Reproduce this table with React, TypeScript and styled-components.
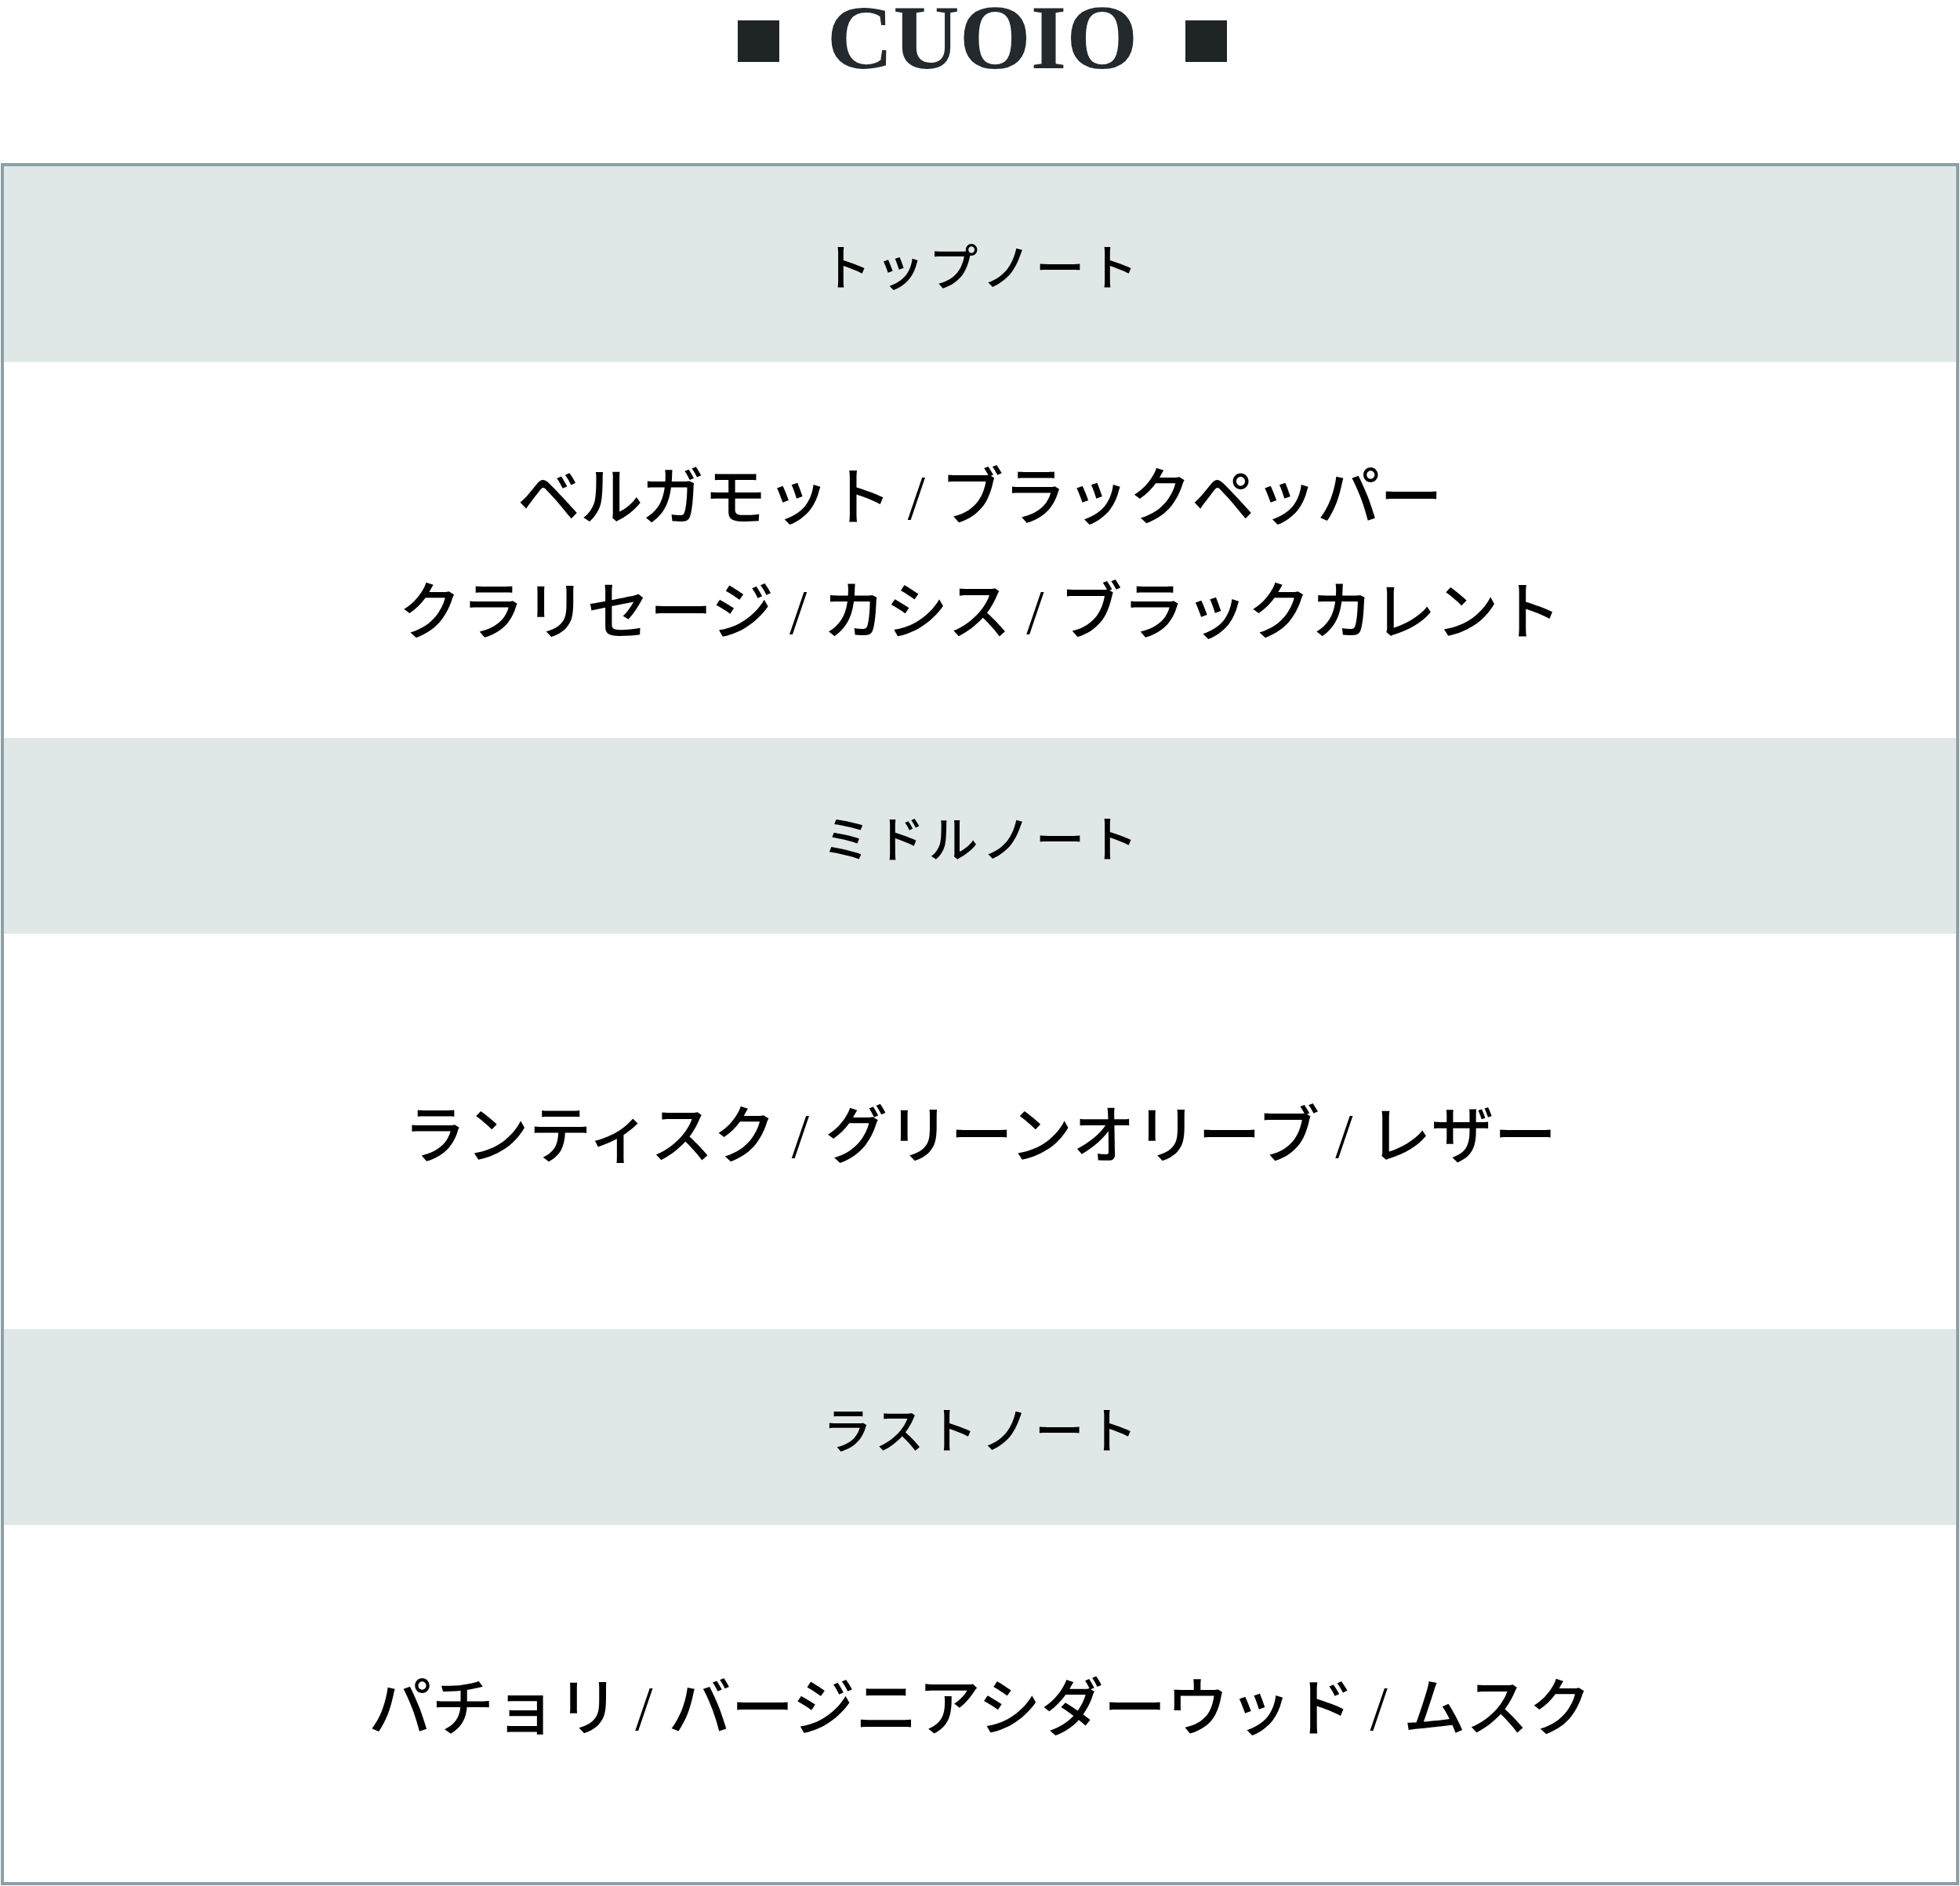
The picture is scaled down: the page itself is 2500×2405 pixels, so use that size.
import styled, { createGlobalStyle } from "styled-components";

const GlobalStyle = createGlobalStyle`
  html, body {
    margin: 0;
    padding: 0;
    background: #ffffff;
  }
`;

type Note = {
  label: string;
  lines: string[];
  height: number;
};

const notes: Note[] = [
  {
    label: "トップノート",
    lines: ["ベルガモット / ブラックペッパー", "クラリセージ / カシス / ブラックカレント"],
    height: 479,
  },
  {
    label: "ミドルノート",
    lines: ["ランティスク / グリーンオリーブ / レザー"],
    height: 504,
  },
  {
    label: "ラストノート",
    lines: ["パチョリ / バージニアシダーウッド / ムスク"],
    height: 455,
  },
];

export default function App() {
  return (
    <>
      <GlobalStyle />
      <Page>
        <TitleRow>
          <Square />
          <Title>CUOIO</Title>
          <Square />
        </TitleRow>
        <NotesTable>
          {notes.map((note) => (
            <NoteGroup key={note.label}>
              <NoteHeader>{note.label}</NoteHeader>
              <NoteBody $height={note.height}>
                {note.lines.map((line) => (
                  <NoteLine key={line}>{line}</NoteLine>
                ))}
              </NoteBody>
            </NoteGroup>
          ))}
        </NotesTable>
      </Page>
    </>
  );
}

const Page = styled.div`
  width: 2500px;
  padding: 0 1px;
  box-sizing: border-box;
`;

const TitleRow = styled.div`
  display: flex;
  justify-content: center;
  align-items: flex-start;
  gap: 61px;
  height: 96px;
  margin-bottom: 112px;
  padding-left: 6px;
`;

const Square = styled.span`
  display: block;
  width: 53px;
  height: 53px;
  margin-top: 26px;
  background: #1f2527;
`;

const Title = styled.h1`
  margin: 0;
  font-family: "Liberation Serif", "Times New Roman", serif;
  font-size: 117px;
  font-weight: 700;
  line-height: 96px;
  color: #23292c;
`;

const NotesTable = styled.div`
  border: 4px solid #8ca0a6;
  display: flex;
  flex-direction: column;
`;

const NoteGroup = styled.section`
  display: flex;
  flex-direction: column;
`;

const NoteHeader = styled.div`
  height: 250px;
  box-sizing: border-box;
  display: flex;
  align-items: center;
  justify-content: center;
  background: #e0e8e7;
  border-bottom: 1px solid #e9eeee;
  font-family: "Liberation Serif", "Noto Sans CJK JP", serif;
  font-size: 63px;
  font-weight: 500;
  letter-spacing: 5px;
  padding-left: 5px;
  color: #000000;
`;

const NoteBody = styled.div<{ $height: number }>`
  height: ${(p) => p.$height}px;
  box-sizing: border-box;
  padding-top: 12px;
  display: flex;
  flex-direction: column;
  align-items: center;
  justify-content: center;
  background: #ffffff;
`;

const NoteLine = styled.p`
  margin: 0;
  font-family: "Liberation Serif", "Noto Sans CJK JP", serif;
  font-size: 80px;
  font-weight: 500;
  line-height: 146px;
  color: #000000;
  white-space: nowrap;
`;
